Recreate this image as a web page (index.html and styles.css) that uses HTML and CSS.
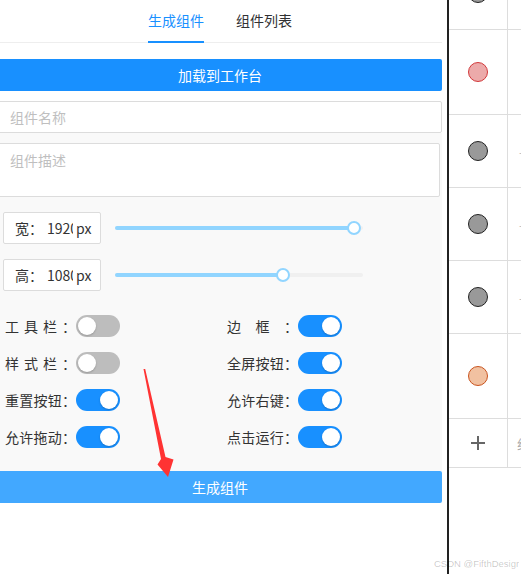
FILE: index.html
```html
<!DOCTYPE html>
<html lang="zh-CN">
<head>
<meta charset="utf-8">
<title>生成组件</title>
<link rel="stylesheet" href="styles.css">
</head>
<body>
<div class="page">
  <div class="panel">
    <div class="tabs">
      <div class="tab active">生成组件</div>
      <div class="tab">组件列表</div>
    </div>
    <div class="btn btn-load">加载到工作台</div>
    <input class="field" type="text" placeholder="组件名称">
    <div class="form">
      <textarea class="area" placeholder="组件描述"></textarea>
      <div class="size-row">
        <div class="size-box"><span class="size-label">宽：</span><input class="size-num" type="text" value="1920"><span class="size-unit">px</span></div>
        <div class="slider">
          <div class="slider-fill" style="width:239px"></div>
          <div class="slider-thumb" style="left:232px"></div>
        </div>
      </div>
      <div class="size-row">
        <div class="size-box"><span class="size-label">高：</span><input class="size-num" type="text" value="1080"><span class="size-unit">px</span></div>
        <div class="slider">
          <div class="slider-fill" style="width:168px"></div>
          <div class="slider-thumb" style="left:161px"></div>
        </div>
      </div>
      <div class="switches">
        <div class="sw-item"><span class="sw-label">工具栏：</span><span class="switch"></span></div>
        <div class="sw-item"><span class="sw-label">边框：</span><span class="switch on"></span></div>
        <div class="sw-item"><span class="sw-label">样式栏：</span><span class="switch"></span></div>
        <div class="sw-item"><span class="sw-label">全屏按钮：</span><span class="switch on"></span></div>
        <div class="sw-item"><span class="sw-label">重置按钮：</span><span class="switch on"></span></div>
        <div class="sw-item"><span class="sw-label">允许右键：</span><span class="switch on"></span></div>
        <div class="sw-item"><span class="sw-label">允许拖动：</span><span class="switch on"></span></div>
        <div class="sw-item"><span class="sw-label">点击运行：</span><span class="switch on"></span></div>
      </div>
    </div>
    <div class="btn btn-gen">生成组件</div>
  </div>
  <div class="divider"></div>
  <div class="list">
    <div class="row h73"><div class="cell-a"><span class="dot gray"></span></div><div class="cell-b"></div></div>
    <div class="row h85"><div class="cell-a"><span class="dot red"></span></div><div class="cell-b"></div></div>
    <div class="row h73"><div class="cell-a"><span class="dot gray"></span></div><div class="cell-b"><span class="mark">-</span></div></div>
    <div class="row h73"><div class="cell-a"><span class="dot gray"></span></div><div class="cell-b"><span class="mark">-</span></div></div>
    <div class="row h73"><div class="cell-a"><span class="dot gray"></span></div><div class="cell-b"><span class="mark">-</span></div></div>
    <div class="row h85"><div class="cell-a"><span class="dot orange"></span></div><div class="cell-b"></div></div>
    <div class="row h49"><div class="cell-a">
      <svg class="plus" width="14" height="14" viewBox="0 0 14 14"><path d="M7 0V14M0 7H14" stroke="#666" stroke-width="2" fill="none"/></svg>
    </div><div class="cell-b"><span class="add-text">组件</span></div></div>
  </div>
</div>
<svg class="arrow" width="521" height="574" viewBox="0 0 521 574">
  <polygon points="143.5,369 145.2,369 165.5,457 173.5,459.5 168,477 157.5,464.5 161,459" fill="#ff3333"/>
</svg>
<div class="watermark">CSDN @FifthDesign</div>
</body>
</html>
```
FILE: styles.css
```css
* { box-sizing: border-box; }
html, body { margin: 0; padding: 0; }
body {
  width: 521px;
  height: 574px;
  overflow: hidden;
  position: relative;
  background: #fff;
  font-family: "Noto Sans CJK SC", "Noto Sans", sans-serif;
  font-size: 14px;
  color: #333;
}
.page {
  display: flex;
  height: 574px;
}
.panel {
  flex: none;
  width: 449px;
  margin-left: -2px;
  padding-right: 5px;
  display: flex;
  flex-direction: column;
}
.tabs {
  height: 43px;
  border-bottom: 1px solid #eeeeee;
  display: flex;
  justify-content: center;
  align-items: flex-start;
  gap: 32px;
}
.tab {
  height: 43px;
  line-height: 40px;
  margin-bottom: -1px;
  color: #303133;
  border-bottom: 2px solid transparent;
}
.tab.active {
  color: #1890ff;
  border-bottom-color: #1890ff;
}
.btn {
  height: 32px;
  line-height: 32px;
  text-align: center;
  color: #fff;
  border-radius: 2px;
}
.btn-load {
  margin-top: 16px;
  background: #1890ff;
}
.field {
  display: block;
  width: 100%;
  height: 32px;
  margin: 10px 0 0;
  padding: 0 11px;
  border: 1px solid #dcdcdc;
  border-radius: 2px;
  font-family: inherit;
  font-size: 14px;
  color: #333;
  background: #fff;
  outline: none;
}
.field::placeholder, .area::placeholder { color: #bfbfbf; }
.form {
  background: #f9f9f9;
  padding: 10px 0 23px;
}
.area {
  display: block;
  width: 442px;
  height: 54px;
  margin: 0;
  padding: 5px 11px;
  border: 1px solid #dcdcdc;
  border-radius: 2px;
  font-family: inherit;
  font-size: 14px;
  line-height: 22px;
  resize: none;
  background: #fff;
  outline: none;
}
.size-row {
  display: flex;
  align-items: center;
  margin-top: 15px;
  padding-left: 5px;
}
.size-box {
  width: 98px;
  height: 32px;
  border: 1px solid #dcdcdc;
  border-radius: 2px;
  background: #fff;
  display: flex;
  align-items: center;
  padding-left: 11px;
  line-height: 20px;
}
.size-label { width: 32px; flex: none; color: #333; }
.size-num {
  width: 26px;
  height: 20px;
  flex: none;
  margin: 0;
  padding: 0;
  border: 0;
  outline: none;
  background: transparent;
  font-family: inherit;
  font-size: 14px;
  color: #333;
}
.size-unit { margin-left: 3px; color: #333; }
.slider {
  position: relative;
  width: 248px;
  height: 14px;
  margin-left: 14px;
}
.slider::before {
  content: "";
  position: absolute;
  left: 0;
  right: 0;
  top: 5px;
  height: 4px;
  border-radius: 2px;
  background: #f0f0f0;
}
.slider-fill {
  position: absolute;
  left: 0;
  top: 5px;
  height: 4px;
  border-radius: 2px;
  background: #91d5ff;
}
.slider-thumb {
  position: absolute;
  top: 0;
  width: 14px;
  height: 14px;
  border-radius: 50%;
  border: 2px solid #91d5ff;
  background: #fff;
}
.switches {
  margin-top: 24px;
  padding-left: 7px;
  display: grid;
  grid-template-columns: 222px 1fr;
  row-gap: 15px;
}
.sw-item {
  display: flex;
  align-items: center;
  height: 22px;
}
.sw-label {
  display: inline-block;
  width: 71px;
  line-height: 22px;
  text-align: justify;
  text-align-last: justify;
  color: #333;
}
.switch {
  position: relative;
  width: 44px;
  height: 22px;
  border-radius: 11px;
  background: #bdbdbd;
  flex: none;
}
.switch::after {
  content: "";
  position: absolute;
  top: 2px;
  left: 2px;
  width: 18px;
  height: 18px;
  border-radius: 50%;
  background: #fff;
  box-shadow: 0 1px 2px rgba(0,0,0,0.2);
}
.switch.on { background: #1890ff; }
.switch.on::after { left: 24px; }
.btn-gen {
  background: #42a8ff;
}
.divider {
  flex: none;
  width: 2px;
  background: #222;
}
.list {
  flex: none;
  width: 72px;
  margin-top: -43px;
  display: flex;
  flex-direction: column;
}
.row {
  display: flex;
  border-bottom: 1px solid #dddddd;
}
.h73 { height: 73px; }
.h85 { height: 85px; }
.h49 { height: 49px; }
.cell-a {
  width: 58px;
  display: flex;
  align-items: center;
  justify-content: center;
}
.cell-b {
  flex: 1;
  border-left: 1px solid #dddddd;
  display: flex;
  align-items: center;
  padding-left: 9px;
  overflow: hidden;
  white-space: nowrap;
}
.mark { color: #bbb; font-size: 12px; margin-left: 2px; }
.add-text { color: #aaa; font-size: 13px; }
.dot {
  width: 20px;
  height: 20px;
  border-radius: 50%;
  border: 1px solid #222;
}
.dot.gray { background: #999999; }
.dot.red { background: #ecaaaa; border-color: #d2393b; }
.dot.orange { background: #f1c1a1; border-color: #c9541f; }
.plus { display: block; }
.arrow {
  position: absolute;
  left: 0;
  top: 0;
  pointer-events: none;
}
.watermark {
  position: absolute;
  left: 434px;
  top: 557px;
  width: 85px;
  overflow: hidden;
  font-family: "Liberation Sans", Arial, sans-serif;
  font-size: 9.5px;
  line-height: 13px;
  color: rgba(0,0,0,0.22);
  white-space: nowrap;
}
```
